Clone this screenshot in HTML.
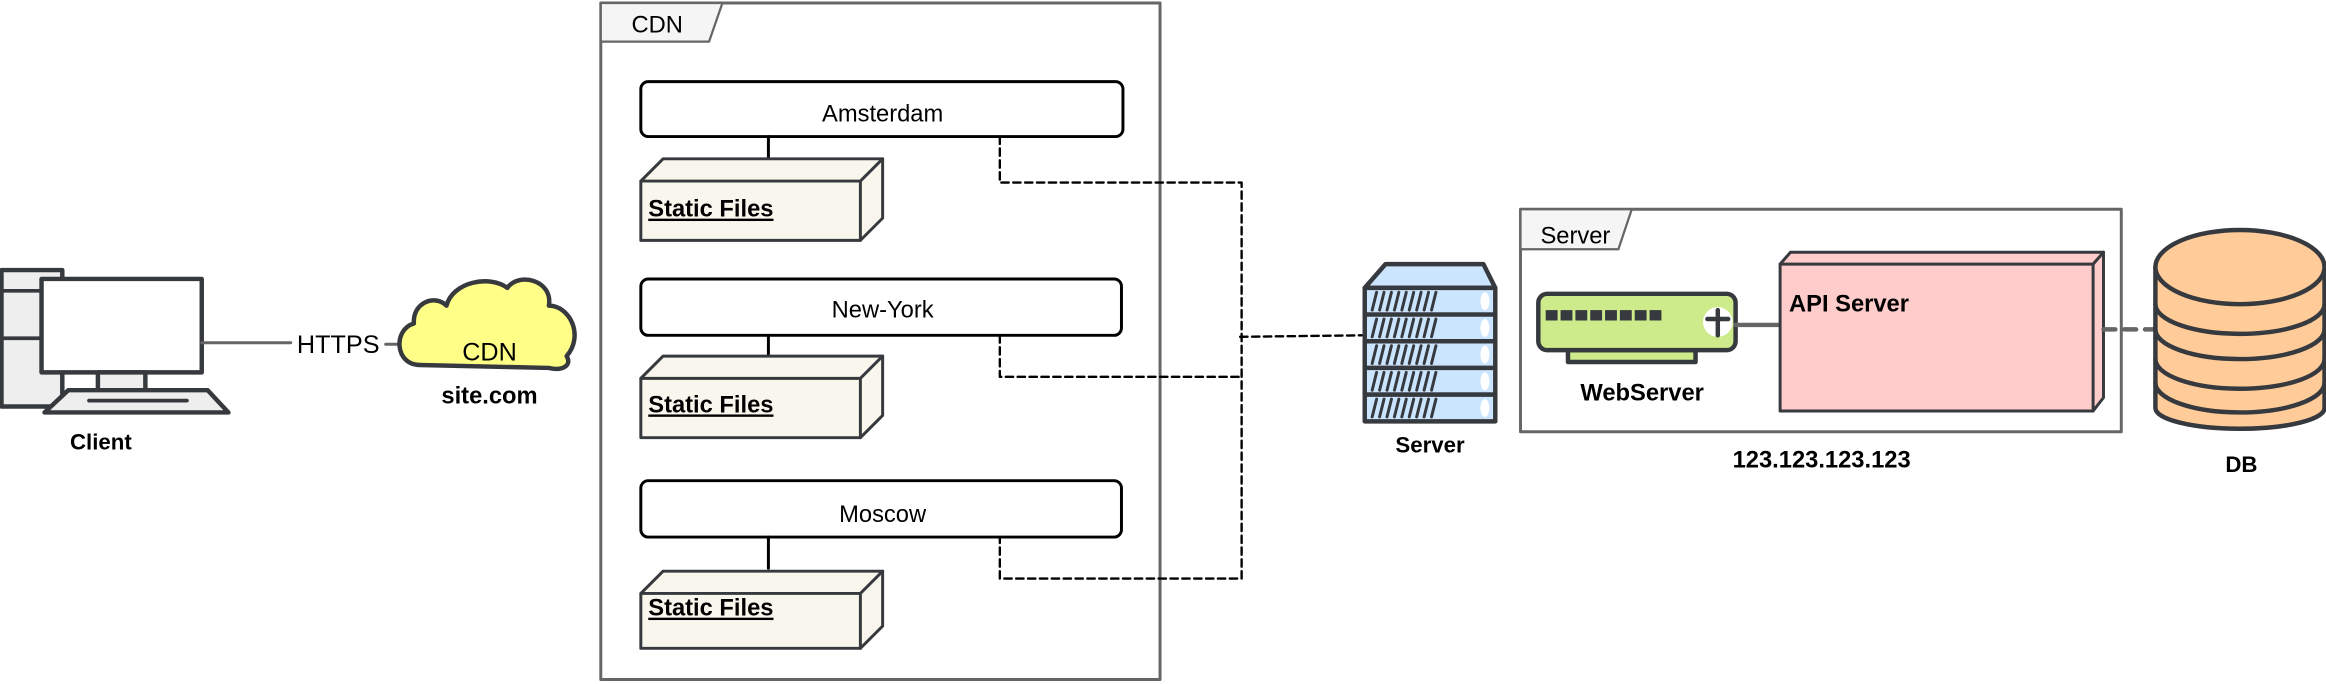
<!DOCTYPE html>
<html><head><meta charset="utf-8"><style>
html,body{margin:0;padding:0;background:#fff;}
svg{display:block;}
text{font-family:"Liberation Sans",sans-serif;fill:#000;}
</style></head><body>
<svg width="2326" height="684" viewBox="0 0 1568 461" xmlns="http://www.w3.org/2000/svg">
<g stroke="#36393d" stroke-linejoin="round" stroke-linecap="round">
<!-- Client -->
<rect x="1" y="182" width="41" height="92" fill="#eee" stroke-width="3"/>
<line x1="1" y1="196" x2="40" y2="196" stroke-width="2.5"/>
<line x1="1" y1="228" x2="40" y2="228" stroke-width="2.5"/>
<rect x="28" y="188" width="108" height="63" fill="#fff" stroke-width="3"/>
<rect x="66" y="251" width="32" height="12" fill="#eee" stroke-width="3"/>
<path d="M46 263 L140 263 L154 278 L30 278 Z" fill="#eee" stroke-width="3"/>
<line x1="60" y1="270" x2="126" y2="270" stroke-width="2.5"/>
<line x1="136" y1="231" x2="196" y2="231" stroke="#666" stroke-width="2"/>
<line x1="260" y1="232" x2="272" y2="232" stroke="#666" stroke-width="2"/>
<!-- Cloud -->
<path d="M283 246 C266 246 265 222 279 218 C278 204 293 198 301 206 C305 190 330 185 342 194 C350 183 373 189 370 206 C384 206 394 226 382 240 C386 247 378 250 370 248 Z" fill="#ffff88" stroke-width="3"/>
<!-- CDN frame -->
<rect x="405" y="2" width="377" height="456" fill="none" stroke="#666" stroke-width="2"/>
<path d="M405 2 L487 2 L478 28 L405 28 Z" fill="#f5f5f5" stroke="#666" stroke-width="1.5"/>
<g stroke="#000" stroke-width="2" fill="#fff">
<rect x="432" y="55" width="325" height="37" rx="5"/>
<rect x="432" y="188" width="324" height="38" rx="5"/>
<rect x="432" y="324" width="324" height="38" rx="5"/>
<line x1="518" y1="92" x2="518" y2="107"/>
<line x1="518" y1="226" x2="518" y2="240"/>
<line x1="518" y1="362" x2="518" y2="383"/>
</g>
<g stroke="#36393d" stroke-width="2" fill="#f9f7ed">
<path d="M432 122 L447 107 L595 107 L595 147 L580 162 L432 162 Z"/>
<path d="M432 122 L580 122 L595 107 M580 122 L580 162" fill="none"/>
<path d="M432 255 L447 240 L595 240 L595 280 L580 295 L432 295 Z"/>
<path d="M432 255 L580 255 L595 240 M580 255 L580 295" fill="none"/>
<path d="M432 400 L447 385 L595 385 L595 422 L580 437 L432 437 Z"/>
<path d="M432 400 L580 400 L595 385 M580 400 L580 437" fill="none"/>
</g>
<g stroke="#000" stroke-width="1.6" fill="none" stroke-dasharray="5,3">
<path d="M674 92 L674 123 L837 123 L837 390 L674 390 L674 362"/>
<path d="M674 226 L674 254 L836 254"/>
<path d="M836 227 L918 226"/>
</g>
<!-- server rack -->
<path d="M920 194 L934 178 L1000 178 L1008 194 Z" fill="#cce5ff" stroke-width="3"/>
<g fill="#cce5ff" stroke-width="3">
<rect x="920" y="194" width="88" height="18"/><rect x="920" y="212" width="88" height="18"/>
<rect x="920" y="230" width="88" height="18"/><rect x="920" y="248" width="88" height="18"/>
<rect x="920" y="266" width="88" height="18"/>
</g>
<g stroke-width="2"><path d="M925 209l3-12M930 209l3-12M935 209l3-12M940 209l3-12M945 209l3-12M950 209l3-12M955 209l3-12M960 209l3-12M965 209l3-12M925 227l3-12M930 227l3-12M935 227l3-12M940 227l3-12M945 227l3-12M950 227l3-12M955 227l3-12M960 227l3-12M965 227l3-12M925 245l3-12M930 245l3-12M935 245l3-12M940 245l3-12M945 245l3-12M950 245l3-12M955 245l3-12M960 245l3-12M965 245l3-12M925 263l3-12M930 263l3-12M935 263l3-12M940 263l3-12M945 263l3-12M950 263l3-12M955 263l3-12M960 263l3-12M965 263l3-12M925 281l3-12M930 281l3-12M935 281l3-12M940 281l3-12M945 281l3-12M950 281l3-12M955 281l3-12M960 281l3-12M965 281l3-12"/></g>
<g fill="#fff" stroke="none"><ellipse cx="1001" cy="203" rx="3" ry="6"/><ellipse cx="1001" cy="221" rx="3" ry="6"/><ellipse cx="1001" cy="239" rx="3" ry="6"/><ellipse cx="1001" cy="257" rx="3" ry="6"/><ellipse cx="1001" cy="275" rx="3" ry="6"/></g>
<!-- Server frame -->
<rect x="1025" y="141" width="405" height="150" fill="none" stroke="#666" stroke-width="2"/>
<path d="M1025 141 L1100 141 L1091 168 L1025 168 Z" fill="#f5f5f5" stroke="#666" stroke-width="1.5"/>
<!-- switch -->
<rect x="1057" y="236" width="86" height="8" fill="#cdeb8b" stroke-width="3"/>
<rect x="1037" y="198" width="133" height="38" rx="6" fill="#cdeb8b" stroke-width="3"/>
<g fill="#36393d" stroke="none">
<rect x="1042" y="209" width="8" height="7"/><rect x="1052" y="209" width="8" height="7"/><rect x="1062" y="209" width="8" height="7"/><rect x="1072" y="209" width="8" height="7"/><rect x="1082" y="209" width="8" height="7"/><rect x="1092" y="209" width="8" height="7"/><rect x="1102" y="209" width="8" height="7"/><rect x="1112" y="209" width="8" height="7"/>
</g>
<circle cx="1158" cy="217" r="10" fill="#fff" stroke="none"/>
<path d="M1151 215 L1165 215 M1158 209 L1158 226" stroke-width="3"/>
<line x1="1170" y1="219" x2="1200" y2="219" stroke="#666" stroke-width="3"/>
<!-- API server -->
<path d="M1200 178 L1207 170 L1418 170 L1418 268 L1411 277 L1200 277 Z" fill="#ffcccc" stroke-width="2"/>
<path d="M1200 178 L1411 178 L1418 170 M1411 178 L1411 277" fill="none" stroke-width="2"/>
<line x1="1418" y1="222" x2="1453" y2="222" stroke="#666" stroke-width="3" stroke-dasharray="8,6"/>
<!-- DB -->
<path d="M1453 180 L1453 275 A57 14 0 0 0 1567 275 L1567 180" fill="#ffcc99" stroke-width="3"/>
<ellipse cx="1510" cy="180" rx="57" ry="25" fill="#ffcc99" stroke-width="3"/>
<path d="M1453 205 A57 20 0 0 0 1567 205 M1453 222 A57 20 0 0 0 1567 222 M1453 242 A57 20 0 0 0 1567 242 M1453 258 A57 20 0 0 0 1567 258" fill="none" stroke-width="3"/>
</g>
<g font-size="16">
<text x="68" y="303" text-anchor="middle" font-weight="bold" font-size="15">Client</text>
<text x="228" y="238" text-anchor="middle" font-size="17">HTTPS</text>
<text x="330" y="243" text-anchor="middle" font-size="17">CDN</text>
<text x="330" y="272" text-anchor="middle" font-weight="bold" font-size="16">site.com</text>
<text x="443" y="22" text-anchor="middle" font-size="16">CDN</text>
<text x="595" y="82" text-anchor="middle" font-size="16">Amsterdam</text>
<text x="595" y="214" text-anchor="middle" font-size="16">New-York</text>
<text x="595" y="352" text-anchor="middle" font-size="16">Moscow</text>
<g font-weight="bold" font-size="16" text-decoration="underline">
<text x="437" y="146">Static Files</text>
<text x="437" y="278">Static Files</text>
<text x="437" y="415">Static Files</text>
</g>
<text x="964" y="305" text-anchor="middle" font-weight="bold" font-size="15">Server</text>
<text x="1062" y="164" text-anchor="middle" font-size="16">Server</text>
<text x="1107" y="270" text-anchor="middle" font-weight="bold" font-size="16">WebServer</text>
<text x="1206" y="210" font-weight="bold" font-size="16">API Server</text>
<text x="1228" y="315" text-anchor="middle" font-weight="bold" font-size="16">123.123.123.123</text>
<text x="1511" y="318" text-anchor="middle" font-weight="bold" font-size="15">DB</text>
</g>
</svg>
</body></html>
